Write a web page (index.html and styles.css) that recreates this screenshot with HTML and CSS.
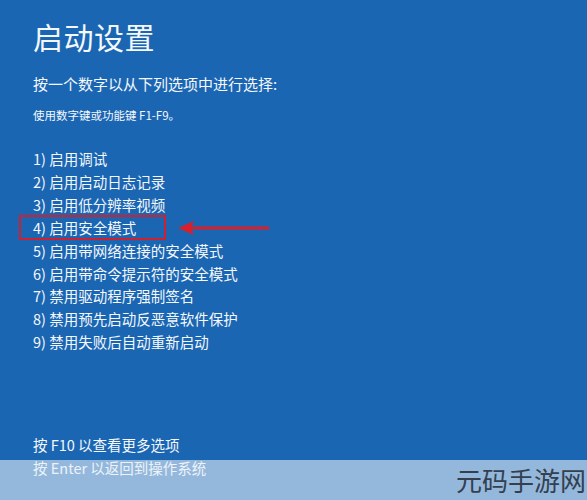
FILE: index.html
```html
<!DOCTYPE html>
<html lang="zh-CN">
<head>
<meta charset="utf-8">
<link rel="stylesheet" href="styles.css">
</head>
<body>
<div class="screen">
  <h1 class="title">启动设置</h1>
  <p class="lead">按一个数字以从下列选项中进行选择:</p>
  <p class="hint">使用数字键或功能键 F1-F9。</p>
  <ol class="options">
    <li>1) 启用调试</li>
    <li>2) 启用启动日志记录</li>
    <li>3) 启用低分辨率视频</li>
    <li class="selected">4) 启用安全模式</li>
    <li>5) 启用带网络连接的安全模式</li>
    <li>6) 启用带命令提示符的安全模式</li>
    <li>7) 禁用驱动程序强制签名</li>
    <li>8) 禁用预先启动反恶意软件保护</li>
    <li>9) 禁用失败后自动重新启动</li>
  </ol>
  <div class="footer">
    <p>按 F10 以查看更多选项</p>
    <p>按 Enter 以返回到操作系统</p>
  </div>
  <svg class="arrow" width="92" height="16" viewBox="0 0 92 16">
    <path d="M10 8 H90" stroke="#d9202a" stroke-width="3" stroke-linecap="round"/>
    <path d="M0 8 L16 1 L13 8 L16 15 Z" fill="#d9202a"/>
  </svg>
  <div class="band"></div>
  <div class="watermark">元码手游网</div>
</div>
</body>
</html>
```
FILE: styles.css
```css
html, body {
  margin: 0;
  padding: 0;
}
body {
  font-family: "Noto Sans CJK SC", "Noto Sans", sans-serif;
  background: #1b66b3;
}
.screen {
  position: relative;
  width: 587px;
  height: 500px;
  overflow: hidden;
  background: #1b66b3;
  color: #f4f8fc;
  padding-left: 33px;
  box-sizing: border-box;
}
.title {
  margin: 0;
  padding-top: 16px;
  font-size: 30px;
  font-weight: 400;
  line-height: 40px;
  letter-spacing: 0.5px;
}
.lead {
  margin: 18px 0 0;
  font-size: 15px;
  line-height: 20px;
}
.hint {
  margin: 13px 0 0;
  font-size: 11.5px;
  line-height: 16px;
}
.options {
  list-style: none;
  margin: 25px 0 0;
  padding: 0;
  font-size: 14.5px;
  line-height: 22.9px;
}
.options li {
  position: relative;
}
.selected::before {
  content: "";
  position: absolute;
  left: -14px;
  top: -2px;
  width: 143px;
  height: 21px;
  border: 2px solid #cf2030;
}
.arrow {
  position: absolute;
  left: 178px;
  top: 220px;
}
.footer {
  margin-top: 79px;
  font-size: 14.5px;
  line-height: 23px;
}
.footer p {
  margin: 0;
}
.band {
  position: absolute;
  left: 0;
  right: 0;
  top: 460px;
  bottom: 0;
  background: rgba(230, 238, 246, 0.6);
}
.watermark {
  position: absolute;
  right: 1px;
  top: 461px;
  font-size: 26px;
  line-height: 38px;
  font-weight: 400;
  color: #34404f;
  white-space: nowrap;
}
```
